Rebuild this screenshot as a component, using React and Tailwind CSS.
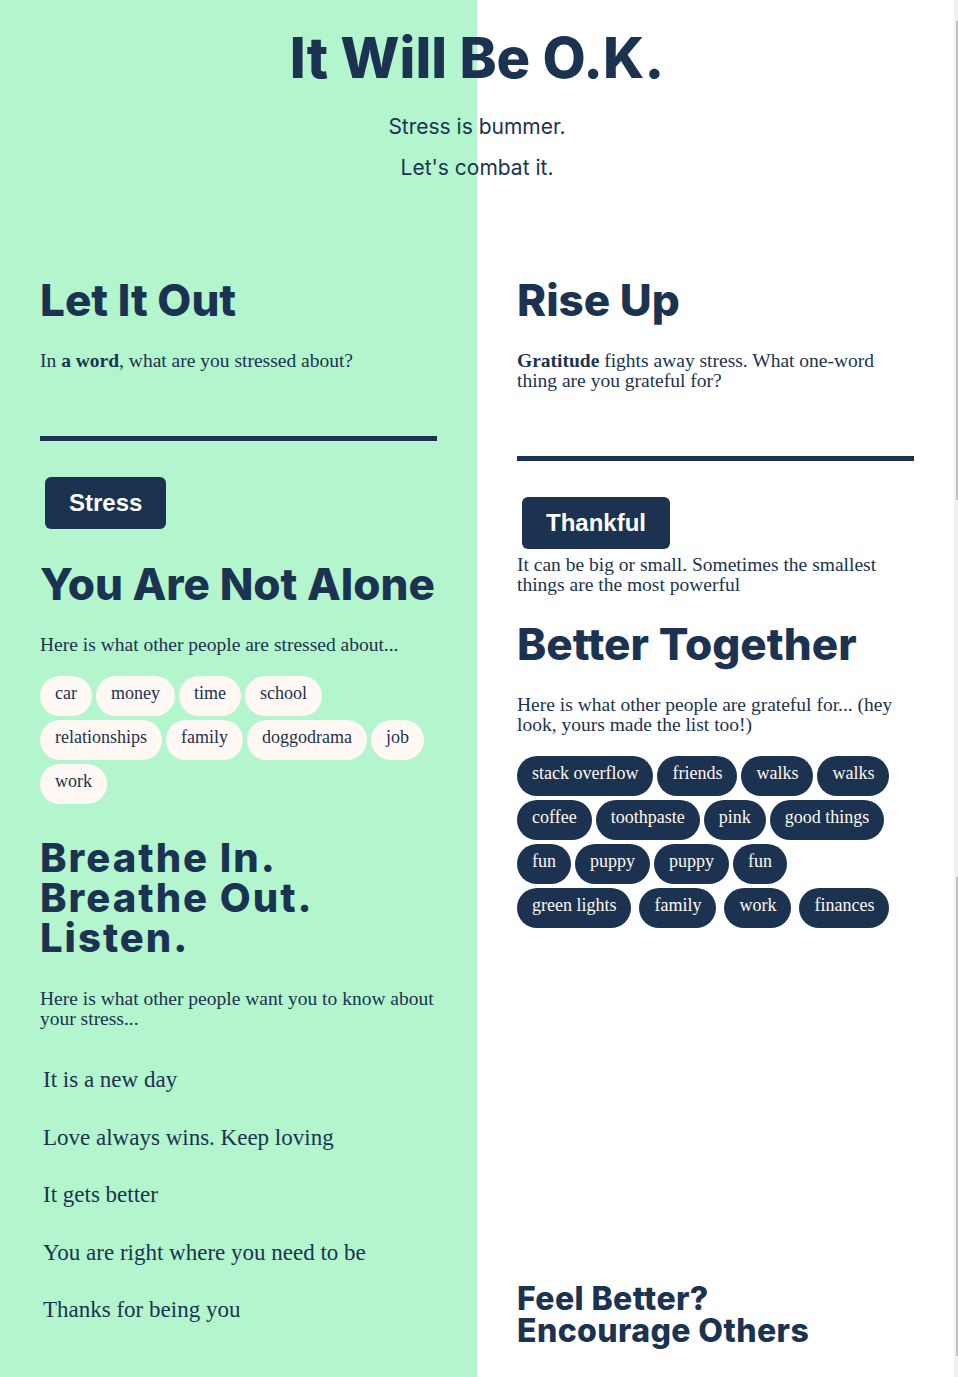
import React from "react";

const HEAD = { fontFamily: "Inter, 'DejaVu Sans', sans-serif" };
const SERIF = { fontFamily: "'Liberation Serif', 'DejaVu Serif', serif" };
const BTN = { fontFamily: "'Liberation Sans', Arial, sans-serif" };

const stressed = ["car", "money", "time", "school", "relationships", "family", "doggodrama", "job", "work"];
const grateful = [
  "stack overflow", "friends", "walks", "walks",
  "coffee", "toothpaste", "pink", "good things",
  "fun", "puppy", "puppy", "fun",
  "green lights", "family", "work", "finances",
];
const messages = [
  "It is a new day",
  "Love always wins. Keep loving",
  "It gets better",
  "You are right where you need to be",
  "Thanks for being you",
];

function H2({ children, className = "" }) {
  return (
    <h2 style={HEAD} className={"text-[44px] leading-[44px] font-extrabold text-[#1b3350] " + className}>
      {children}
    </h2>
  );
}

function Body({ children, className = "" }) {
  return (
    <p style={SERIF} className={"text-[19.5px] leading-[20px] text-[#1b3350] " + className}>
      {children}
    </p>
  );
}

function Button({ children, className = "" }) {
  return (
    <button
      style={BTN}
      className={"ml-[5px] h-[52px] rounded-[6px] bg-[#1b3350] px-6 text-[24px] font-bold text-white " + className}
    >
      {children}
    </button>
  );
}

export default function App() {
  return (
    <div className="flex h-[1377px] w-[958px] overflow-hidden bg-white">
      <main className="w-[954px] bg-[linear-gradient(to_right,#b3f5cc_477px,#ffffff_477px)] text-[#1b3350]">
        <header className="pt-[30px] text-center">
          <h1 style={HEAD} className="text-[56px] leading-[56px] font-extrabold">It Will Be O.K.</h1>
          <p style={HEAD} className="mt-[27px] text-[21px] leading-[28px]">Stress is bummer.</p>
          <p style={HEAD} className="mt-[13px] text-[21px] leading-[28px]">Let's combat it.</p>
        </header>

        <div className="mt-[96px] grid grid-cols-2">
          {/* Left column */}
          <section className="px-10">
            <H2>Let It Out</H2>
            <Body className="mt-[29px]">
              In <b>a word</b>, what are you stressed about?
            </Body>
            <div className="h-[70px] border-b-[5px] border-[#1b3350]" />
            <Button className="mt-[36px]">Stress</Button>

            <H2 className="mt-[33px]">You Are Not Alone</H2>
            <Body className="mt-[29px]">Here is what other people are stressed about...</Body>
            <div className="mt-[21px] flex flex-wrap gap-[4px]">
              {stressed.map((w, i) => (
                <span
                  key={i}
                  style={SERIF}
                  className="flex h-[40px] items-center rounded-full bg-[#fff8f4] px-[15px] pb-[5px] text-[18px] text-[#1b3350]"
                >
                  {w}
                </span>
              ))}
            </div>

            <h2 style={HEAD} className="mt-[34px] text-[40px] leading-[40px] font-extrabold tracking-[2px]">
              Breathe In.
              <br />
              Breathe Out.
              <br />
              Listen.
            </h2>
            <Body className="mt-[31px]">Here is what other people want you to know about your stress...</Body>
            <div className="mt-[36px] flex flex-col gap-[27.5px] pl-[3px]">
              {messages.map((m, i) => (
                <p key={i} style={SERIF} className="text-[23px] leading-[30px]">
                  {m}
                </p>
              ))}
            </div>
          </section>

          {/* Right column */}
          <section className="px-10">
            <H2>Rise Up</H2>
            <Body className="mt-[29px]">
              <b>Gratitude</b> fights away stress. What one-word thing are you grateful for?
            </Body>
            <div className="h-[70px] border-b-[5px] border-[#1b3350]" />
            <Button className="mt-[36px]">Thankful</Button>
            <Body className="mt-[6px]">It can be big or small. Sometimes the smallest things are the most powerful</Body>

            <H2 className="mt-[27px]">Better Together</H2>
            <Body className="mt-[29px]">
              Here is what other people are grateful for... (hey look, yours made the list too!)
            </Body>
            <div className="mt-[21px] flex flex-wrap gap-[4px] pr-[12px]">
              {grateful.map((w, i) => (
                <span
                  key={i}
                  style={SERIF}
                  className={
                    "flex h-[40px] items-center rounded-full bg-[#1b3350] px-[15px] pb-[5px] text-[18px] text-[#fff8f4] " +
                    (i >= 13 ? "ml-[4px]" : "")
                  }
                >
                  {w}
                </span>
              ))}
            </div>

            <h2 style={HEAD} className="mt-[355px] text-[32px] leading-[32px] font-extrabold tracking-[0.4px]">
              Feel Better?
              <br />
              Encourage Others
            </h2>
          </section>
        </div>
      </main>

      {/* scrollbar strip */}
      <div className="flex w-[4px] flex-col bg-[#f1f1f1]">
        <div className="ml-[2px] mt-[21px] h-[479px] w-[2px] bg-[#c1c1c1]" />
        <div className="ml-[2px] mt-[377px] h-[479px] w-[2px] bg-[#c1c1c1]" />
      </div>
    </div>
  );
}
